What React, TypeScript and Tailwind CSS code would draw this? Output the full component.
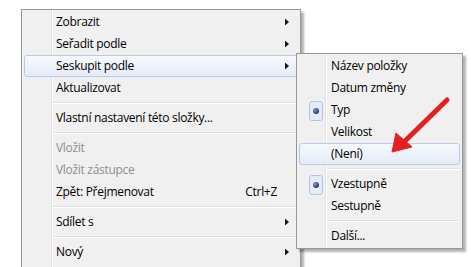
import type { ReactNode } from 'react'

const font = "font-['Open_Sans','Noto_Sans',sans-serif]"

function Arrow() {
  return (
    <svg className="absolute right-[8px] top-1/2 -translate-y-1/2" width="4" height="7" viewBox="0 0 4 7">
      <path d="M0 0 L4 3.5 L0 7 Z" fill="#1a1a1a" />
    </svg>
  )
}

function RadioMark() {
  return (
    <div className="absolute left-[9px] top-[1px] w-[14px] h-[20px] rounded-[3px] border border-[#aec6e8] bg-[#e4ecf8] flex items-center justify-center">
      <div className="w-[6px] h-[6px] rounded-full bg-[radial-gradient(circle_at_35%_35%,#8a96c8,#2a3473_70%)]" />
    </div>
  )
}

function Item({
  children,
  submenu,
  shortcut,
  disabled,
  hot,
  checked,
}: {
  children: ReactNode
  submenu?: boolean
  shortcut?: string
  disabled?: boolean
  hot?: boolean
  checked?: boolean
}) {
  return (
    <div
      className={`relative mx-[2px] h-[22px] flex items-center pl-[31px] pr-[20px] rounded-[3px] border ${
        hot
          ? 'border-[#b7cbe8] bg-[linear-gradient(to_bottom,#f6f9fd,#e4ecf8)]'
          : 'border-transparent'
      } ${disabled ? 'text-[#8e8e8e]' : 'text-black'}`}
    >
      {checked && <RadioMark />}
      <span className="flex-1 whitespace-nowrap">{children}</span>
      {shortcut && <span className="whitespace-nowrap">{shortcut}</span>}
      {submenu && <Arrow />}
    </div>
  )
}

function Separator() {
  return (
    <div className="h-[8px] flex flex-col justify-center ml-[31px] mr-[2px]">
      <div className="h-px bg-[#e0e0e0]" />
      <div className="h-px bg-white" />
    </div>
  )
}

function MainMenu() {
  return (
    <div className="absolute left-[21px] top-[9px] w-[280px] h-[280px] border border-[#979797] shadow-[3px_3px_2px_rgba(0,0,0,0.3)] bg-[linear-gradient(to_right,#f0f0f0_29px,#e2e3e3_29px,#e2e3e3_30px,#ffffff_30px,#ffffff_31px,#f0f0f0_31px)] py-[1px]">
      <Item submenu>Zobrazit</Item>
      <Item submenu>Seřadit podle</Item>
      <Item submenu hot>Seskupit podle</Item>
      <Item>Aktualizovat</Item>
      <Separator />
      <Item>Vlastní nastavení této složky...</Item>
      <Separator />
      <Item disabled>Vložit</Item>
      <Item disabled>Vložit zástupce</Item>
      <Item shortcut="Ctrl+Z">Zpět: Přejmenovat</Item>
      <Separator />
      <Item submenu>Sdílet s</Item>
      <Separator />
      <Item submenu>Nový</Item>
    </div>
  )
}

function SubMenu() {
  return (
    <div className="absolute left-[296px] top-[53px] w-[167px] border border-[#979797] shadow-[3px_3px_2px_rgba(0,0,0,0.3)] bg-[linear-gradient(to_right,#f0f0f0_28px,#e2e3e3_28px,#e2e3e3_29px,#ffffff_29px,#ffffff_30px,#f0f0f0_30px)] py-[1px]">
      <Item>Název položky</Item>
      <Item>Datum změny</Item>
      <Item checked>Typ</Item>
      <Item>Velikost</Item>
      <Item hot>(Není)</Item>
      <Separator />
      <Item checked>Vzestupně</Item>
      <Item>Sestupně</Item>
      <Separator />
      <Item>Další...</Item>
    </div>
  )
}

function RedArrow() {
  return (
    <svg className="absolute left-0 top-0" width="471" height="267" viewBox="0 0 471 267">
      <line x1="447" y1="100" x2="404" y2="142" stroke="#e3201f" strokeWidth="5" strokeLinecap="round" />
      <path d="M392 152 L396 133 L412 147 Z" fill="#e3201f" stroke="#e3201f" strokeWidth="1" strokeLinejoin="round" />
    </svg>
  )
}

export default function App() {
  return (
    <div className={`relative w-[471px] h-[267px] overflow-hidden bg-white text-[12px] tracking-[-0.3px] ${font}`}>
      <MainMenu />
      <SubMenu />
      <RedArrow />
    </div>
  )
}
